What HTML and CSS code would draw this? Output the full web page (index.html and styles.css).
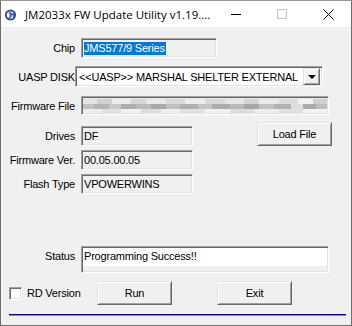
FILE: index.html
```html
<!DOCTYPE html>
<html lang="en">
<head>
    <meta charset="UTF-8">
    <title>JM2033x FW Update Utility v1.19....</title>
<link rel="stylesheet" href="styles.css">
</head>
<body>

<div class="window">
    <div class="titlebar">
        <svg class="app-icon" width="13" height="12" viewBox="0 0 13 12">
            <circle cx="6.5" cy="6" r="5.6" fill="#3b4a9c"/>
            <ellipse cx="6.5" cy="6" rx="3.6" ry="3.4" fill="#ffffff"/>
            <path d="M4.6 3.8h1.6v3.6c0 1-0.6 1.4-1.6 1.2" fill="none" stroke="#3b4a9c" stroke-width="1.2"/>
            <path d="M7.2 8.2V3.8l1.2 2.4 1-2.4v4.4" fill="none" stroke="#3b4a9c" stroke-width="1"/>
        </svg>
        <span class="title">JM2033x FW Update Utility v1.19....</span>
        <div class="caption-btns">
            <div class="cap-btn"><span class="ic-min"></span></div>
            <div class="cap-btn"><span class="ic-max"></span></div>
            <div class="cap-btn">
                <svg width="11" height="11" viewBox="0 0 11 11">
                    <path d="M0.5 0.5L10.5 10.5M10.5 0.5L0.5 10.5" stroke="#000" stroke-width="1"/>
                </svg>
            </div>
        </div>
    </div>

    <div class="content">
        <div class="row row-chip">
            <label>Chip</label>
            <div class="edit edit-chip"><span class="selected">JMS577/9 Series</span></div>
        </div>

        <div class="row row-uasp">
            <label class="wide">UASP DISK</label>
            <div class="combo">
                <span class="combo-text">&lt;&lt;UASP&gt;&gt; MARSHAL SHELTER EXTERNAL</span>
                <div class="combo-btn"><span class="arrow"></span></div>
            </div>
        </div>

        <div class="row row-file">
            <label>Firmware File</label>
            <div class="edit edit-long blurred"></div>
        </div>

        <div class="info-group">
            <div class="info-fields">
                <div class="row">
                    <label>Drives</label>
                    <div class="edit edit-short">DF</div>
                </div>
                <div class="row">
                    <label>Firmware Ver.</label>
                    <div class="edit edit-short">00.05.00.05</div>
                </div>
                <div class="row">
                    <label>Flash Type</label>
                    <div class="edit edit-short">VPOWERWINS</div>
                </div>
            </div>
            <button class="btn btn-load">Load File</button>
        </div>

        <div class="row row-status">
            <label>Status</label>
            <div class="status-box">
                <div class="status-text">Programming Success!!</div>
            </div>
        </div>

        <div class="bottom">
            <div class="check">
                <span class="check-box"></span>
                <span>RD Version</span>
            </div>
            <button class="btn btn-run">Run</button>
            <button class="btn btn-exit">Exit</button>
        </div>

        <div class="sep"></div>
    </div>
</div>

</body>
</html>
```

FILE: styles.css
```css
body {
    margin: 0;
    background-color: #ffffff;
}

.window {
    width: 352px;
    height: 326px;
    box-sizing: border-box;
    border: 1px solid #6f6f6f;
    border-top-color: #9a9a9a;
    background-color: #f0f0f0;
    font-family: "Liberation Sans", Arial, sans-serif;
    font-size: 11px;
    color: #000;
}

/* title bar */
.titlebar {
    height: 26px;
    background-color: #ffffff;
    display: flex;
    align-items: center;
}

.app-icon {
    flex-shrink: 0;
    margin-left: 3px;
    margin-top: 1px;
}

.title {
    margin-left: 8px;
    font-family: "Open Sans", sans-serif;
    font-size: 11.5px;
    color: #000;
    white-space: nowrap;
}

.caption-btns {
    flex-shrink: 0;
    margin-left: auto;
    display: flex;
    height: 26px;
}

.cap-btn {
    width: 46px;
    height: 26px;
    display: flex;
    align-items: center;
    justify-content: center;
}

.ic-min {
    width: 10px;
    height: 1px;
    background-color: #000;
}

.ic-max {
    width: 8px;
    height: 8px;
    border: 1px solid #c6c6c6;
}

/* form */
.content {
    padding-top: 11px;
}

.row {
    display: flex;
    align-items: center;
}

label {
    width: 74px;
    text-align: right;
    margin-right: 6px;
    white-space: nowrap;
    letter-spacing: -0.2px;
}

label.wide {
    margin-right: 0;
}

.row-uasp {
    margin-top: 8px;
}

.row-file {
    margin-top: 9px;
}

.edit {
    box-sizing: border-box;
    height: 20px;
    border-top: 1px solid #a0a0a0;
    border-left: 1px solid #a0a0a0;
    border-right: 1px solid #ffffff;
    border-bottom: 1px solid #ffffff;
    box-shadow: inset 1px 1px 0 #696969, inset -1px -1px 0 #e3e3e3;
    padding: 3px 0 0 2px;
    line-height: 13px;
    letter-spacing: -0.2px;
    white-space: nowrap;
}

.edit-chip {
    width: 136px;
}

.selected {
    background-color: #0078d7;
    color: #ffffff;
    display: inline-block;
    padding-right: 1px;
}

.edit-long {
    width: 248px;
    height: 19px;
}

.edit-short {
    width: 112px;
}

.blurred {
    background:
        linear-gradient(90deg, #e4e4e4 0, #e4e4e4 6%, #d2d2d2 6%, #d2d2d2 12%, #ececec 12%, #ececec 20%, #d6d6d6 20%, #d6d6d6 26%, #e8e8e8 26%, #e8e8e8 34%, #dadada 34%, #dadada 42%, #ededed 42%, #ededed 50%, #d8d8d8 50%, #d8d8d8 58%, #e6e6e6 58%, #e6e6e6 66%, #d4d4d4 66%, #d4d4d4 72%, #eaeaea 72%, #eaeaea 80%, #dcdcdc 80%, #dcdcdc 88%, #f2f2f2 88%, #f2f2f2 94%, #d0d0d0 94%) 0 2px / 100% 5px no-repeat,
        linear-gradient(90deg, #c2c2c2 0, #c2c2c2 5%, #b4b4b4 5%, #b4b4b4 11%, #c8c8c8 11%, #c8c8c8 16%, #aeaeae 16%, #aeaeae 22%, #bcbcbc 22%, #bcbcbc 28%, #a8a8a8 28%, #a8a8a8 34%, #c0c0c0 34%, #c0c0c0 40%, #b0b0b0 40%, #b0b0b0 47%, #c4c4c4 47%, #c4c4c4 53%, #acacac 53%, #acacac 60%, #bababa 60%, #bababa 66%, #a6a6a6 66%, #a6a6a6 72%, #c2c2c2 72%, #c2c2c2 78%, #b2b2b2 78%, #b2b2b2 85%, #dedede 85%, #dedede 90%, #aaaaaa 90%, #aaaaaa 95%, #bebebe 95%) 0 7px / 100% 5px no-repeat,
        linear-gradient(90deg, #eeeeee 0, #eeeeee 8%, #e0e0e0 8%, #e0e0e0 16%, #f2f2f2 16%, #f2f2f2 24%, #dedede 24%, #dedede 32%, #efefef 32%, #efefef 40%, #e2e2e2 40%, #e2e2e2 50%, #f0f0f0 50%, #f0f0f0 60%, #dddddd 60%, #dddddd 70%, #ececec 70%, #ececec 80%, #e0e0e0 80%, #e0e0e0 90%, #f3f3f3 90%) 0 12px / 100% 5px no-repeat,
        #e6e6e6;
}

/* combo box */
.combo {
    box-sizing: border-box;
    width: 248px;
    height: 21px;
    background-color: #ffffff;
    border-top: 1px solid #a0a0a0;
    border-left: 1px solid #a0a0a0;
    border-right: 1px solid #ffffff;
    border-bottom: 1px solid #ffffff;
    box-shadow: inset 1px 1px 0 #696969, inset -1px -1px 0 #e3e3e3;
    display: flex;
    align-items: center;
    padding: 0 2px 0 3px;
}

.combo-text {
    flex: 1;
    white-space: nowrap;
    letter-spacing: -0.2px;
}

.combo-btn {
    box-sizing: border-box;
    width: 17px;
    height: 17px;
    background-color: #f0f0f0;
    border-top: 1px solid #e3e3e3;
    border-left: 1px solid #e3e3e3;
    border-right: 1px solid #696969;
    border-bottom: 1px solid #696969;
    box-shadow: inset 1px 1px 0 #ffffff, inset -1px -1px 0 #a0a0a0;
    display: flex;
    align-items: center;
    justify-content: center;
}

.arrow {
    width: 0;
    height: 0;
    border-left: 4px solid transparent;
    border-right: 4px solid transparent;
    border-top: 4px solid #000;
    margin-top: 1px;
}

/* drives / version / flash + load button */
.info-group {
    display: flex;
    align-items: flex-start;
    margin-top: 7px;
}

.info-fields {
    display: flex;
    flex-direction: column;
    gap: 4px;
    padding-top: 4px;
}

.btn {
    box-sizing: border-box;
    width: 75px;
    height: 24px;
    background-color: #f0f0f0;
    border-top: 1px solid #e3e3e3;
    border-left: 1px solid #e3e3e3;
    border-right: 1px solid #696969;
    border-bottom: 1px solid #696969;
    box-shadow: inset 1px 1px 0 #ffffff, inset -1px -1px 0 #a0a0a0;
    font-family: "Liberation Sans", Arial, sans-serif;
    font-size: 11px;
    letter-spacing: -0.2px;
    color: #000;
    padding: 0;
}

.btn-load {
    margin-left: 64px;
}

/* status */
.row-status {
    align-items: flex-start;
    margin-top: 52px;
}

.row-status label {
    line-height: 20px;
}

.status-box {
    box-sizing: border-box;
    width: 248px;
    height: 27px;
    border-top: 1px solid #a0a0a0;
    border-left: 1px solid #a0a0a0;
    border-right: 1px solid #ffffff;
    border-bottom: 1px solid #ffffff;
    box-shadow: inset 1px 1px 0 #696969, inset -1px -1px 0 #e3e3e3;
    padding: 1px 1px 0 1px;
}

.status-text {
    height: 18px;
    background-color: #ffffff;
    padding: 2px 0 0 1px;
    box-sizing: border-box;
    line-height: 13px;
    letter-spacing: -0.2px;
}

/* bottom row */
.bottom {
    display: flex;
    align-items: center;
    margin-top: 8px;
}

.check {
    width: 96px;
    display: flex;
    align-items: center;
    padding-left: 8px;
    box-sizing: border-box;
    letter-spacing: -0.2px;
}

.check-box {
    box-sizing: border-box;
    width: 13px;
    height: 13px;
    background-color: #ffffff;
    border-top: 1px solid #a0a0a0;
    border-left: 1px solid #a0a0a0;
    border-right: 1px solid #ffffff;
    border-bottom: 1px solid #ffffff;
    box-shadow: inset 1px 1px 0 #696969, inset -1px -1px 0 #e3e3e3;
    margin-right: 5px;
    margin-top: 1px;
}

.btn-exit {
    margin-left: 45px;
}

.sep {
    margin: 9px 5px 0 8px;
    height: 1px;
    background-color: #0a0a80;
    border-bottom: 1px solid #8a8ab8;
}
```
